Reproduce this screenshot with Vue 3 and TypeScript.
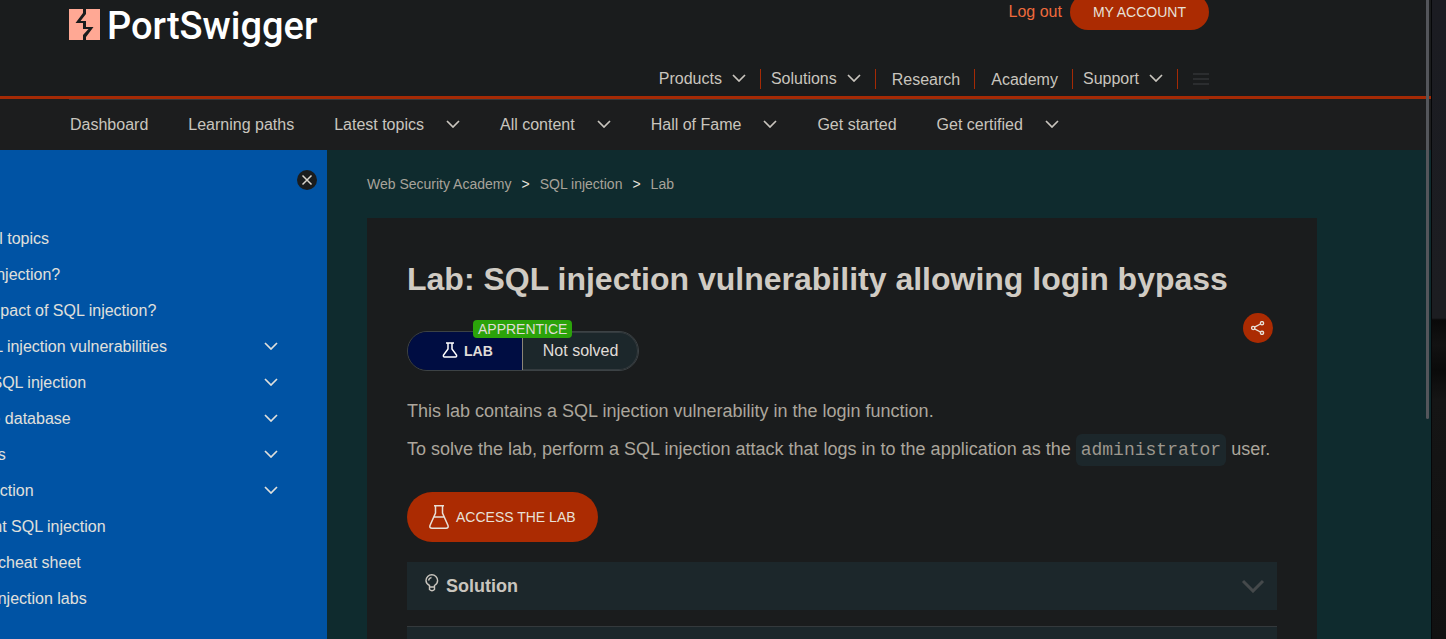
<script setup lang="ts">
interface NavItem {
  label: string
  menu?: boolean
}

const mainNav: NavItem[] = [
  { label: 'Products', menu: true },
  { label: 'Solutions', menu: true },
  { label: 'Research' },
  { label: 'Academy' },
  { label: 'Support', menu: true },
]

const academyNav: NavItem[] = [
  { label: 'Dashboard' },
  { label: 'Learning paths' },
  { label: 'Latest topics', menu: true },
  { label: 'All content', menu: true },
  { label: 'Hall of Fame', menu: true },
  { label: 'Get started' },
  { label: 'Get certified', menu: true },
]

const topics: NavItem[] = [
  { label: 'What is SQL injection?' },
  { label: 'What is the impact of SQL injection?' },
  { label: 'Detecting SQL injection vulnerabilities', menu: true },
  { label: 'Examples of SQL injection', menu: true },
  { label: 'Examining the database', menu: true },
  { label: 'UNION attacks', menu: true },
  { label: 'Blind SQL injection', menu: true },
  { label: 'How to prevent SQL injection' },
  { label: 'SQL injection cheat sheet' },
  { label: 'View all SQL injection labs' },
]
</script>

<template>
  <div class="screen">
    <div class="page">
      <header class="site-header">
        <div class="wrap header-row">
          <a href="#" class="logo">
            <svg width="31" height="31" viewBox="0 0 31 31" aria-hidden="true">
              <rect width="31" height="31" fill="#ffa894" />
              <path
                d="M14 0H17V5L11.500 12H17V18H24.500L17 28V31H14V26L19.500 20H14V14H6.500L14 4Z"
                fill="#1a1c1d"
              />
            </svg>
            <span>PortSwigger</span>
          </a>
          <div class="header-side">
            <div class="account">
              <a href="#" class="logout">Log out</a>
              <a href="#" class="my-account">MY ACCOUNT</a>
            </div>
            <nav class="main-nav" aria-label="Main">
              <template v-for="item in mainNav" :key="item.label">
                <button v-if="item.menu" type="button" class="main-item">
                  {{ item.label }}
                  <svg class="chev" viewBox="0 0 14 8"><path d="M1 1L7 7L13 1" /></svg>
                </button>
                <a v-else href="#" class="main-item plain">{{ item.label }}</a>
              </template>
              <button type="button" class="burger" aria-label="Menu">
                <svg width="16" height="12" viewBox="0 0 16 12">
                  <path d="M0 1H16M0 6H16M0 11H16" stroke="#2b2d2f" stroke-width="2" />
                </svg>
              </button>
            </nav>
          </div>
        </div>
      </header>

      <nav class="academy-nav" aria-label="Academy">
        <div class="wrap academy-row">
          <template v-for="item in academyNav" :key="item.label">
            <button v-if="item.menu" type="button" class="academy-item">
              {{ item.label }}
              <svg class="chev" viewBox="0 0 14 8"><path d="M1 1L7 7L13 1" /></svg>
            </button>
            <a v-else href="#" class="academy-item">{{ item.label }}</a>
          </template>
        </div>
      </nav>

      <div class="body">
        <aside class="sidebar">
          <button type="button" class="close" aria-label="Close">
            <svg width="20" height="20" viewBox="0 0 20 20">
              <path d="M5.5 5.5L14.5 14.5M14.5 5.5L5.5 14.5" />
            </svg>
          </button>
          <a href="#" class="topic back">Back to all topics</a>
          <template v-for="topic in topics" :key="topic.label">
            <button v-if="topic.menu" type="button" class="topic">
              {{ topic.label }}
              <svg class="chev" viewBox="0 0 14 8"><path d="M1 1L7 7L13 1" /></svg>
            </button>
            <a v-else href="#" class="topic">{{ topic.label }}</a>
          </template>
        </aside>

        <main class="main">
          <nav class="crumbs" aria-label="Breadcrumb">
            <a href="#">Web Security Academy</a>
            <span>&gt;</span>
            <a href="#">SQL injection</a>
            <span>&gt;</span>
            <a href="#">Lab</a>
          </nav>

          <article class="card">
            <h1>Lab: SQL injection vulnerability allowing login bypass</h1>
            <div class="status-row">
              <div class="status">
                <span class="level">APPRENTICE</span>
                <span class="kind">
                  <svg width="16" height="16" viewBox="0 0 16 16">
                    <path d="M4 1H12M6 1V7L1.5 13Q1 15 2.500 15H13.500Q15 15 14.500 13L10 7V1" />
                  </svg>
                  LAB
                </span>
                <span class="state">Not solved</span>
              </div>
              <button type="button" class="share" aria-label="Share">
                <svg width="14" height="14" viewBox="0 0 14 14">
                  <path d="M3.500 6.200L9.500 3M3.500 7.800L9.500 11" />
                  <circle cx="2.200" cy="7" r="1.600" />
                  <circle cx="11" cy="2.200" r="1.600" />
                  <circle cx="11" cy="11.800" r="1.600" />
                </svg>
              </button>
            </div>
            <p>This lab contains a SQL injection vulnerability in the login function.</p>
            <p>
              To solve the lab, perform a SQL injection attack that logs in to the application as the
              <code>administrator</code> user.
            </p>
            <a href="#" class="access">
              <svg width="20" height="24" viewBox="0 0 20 24">
                <path d="M5 .8H15M6.500 1V8L1 20.500Q.2 23.200 3 23.200H17Q19.800 23.200 19 20.500L13.500 8V1M5 12H15" />
              </svg>
              ACCESS THE LAB
            </a>
            <details class="panel">
              <summary>
                <svg class="bulb" width="14" height="18" viewBox="0 0 14 18">
                  <path d="M4.500 13V11.500Q1 9.800 1 6.600A5.700 5.700 0 0 1 12.600 6.600Q12.600 9.800 9.500 11.500V13ZM4.500 13V15.500Q7 18 9.500 15.500V13M3.500 6.500Q4 4 6.500 3.500" />
                </svg>
                <span>Solution</span>
                <svg class="panel-chev" width="24" height="14" viewBox="0 0 24 14">
                  <path d="M2 2L12 12L22 2" />
                </svg>
              </summary>
            </details>
            <details class="panel ruled">
              <summary><span>Community solutions</span></summary>
            </details>
          </article>
        </main>
      </div>
      <div class="scroll-thumb"></div>
    </div>
    <div class="backdrop"></div>
  </div>
</template>

<style>
body {
  margin: 0;
  background: #1a1c1d;
}
</style>

<style scoped>
.screen {
  display: flex;
  height: 100vh;
  overflow: hidden;
  font: 16px/20px "Liberation Sans", Arial, sans-serif;
  color: #c9c5be;
}
.page {
  position: relative;
  flex: 1;
  min-width: 0;
  display: flex;
  flex-direction: column;
  overflow: hidden;
  background: #1a1c1d;
}
a {
  color: inherit;
  text-decoration: none;
}
button {
  margin: 0;
  padding: 0;
  border: 0;
  background: none;
  color: inherit;
  font: inherit;
  cursor: pointer;
}
svg {
  flex: none;
  fill: none;
}
.chev {
  width: 14px;
  height: 8px;
  margin-bottom: 2px;
  stroke: currentColor;
  stroke-width: 1.7;
}
.wrap {
  max-width: 1140px;
  margin-left: 69px;
}
.site-header {
  flex: none;
  border-bottom: 3px solid #a52a05;
}
.header-row {
  display: flex;
  justify-content: space-between;
  height: 96px;
}
.logo {
  display: flex;
  align-items: flex-start;
  gap: 7px;
  padding-top: 9px;
  color: #fff;
  font: 500 38px/34px Roboto, sans-serif;
}
.header-side {
  display: flex;
  flex-direction: column;
  align-items: flex-end;
  justify-content: space-between;
}
.account {
  display: flex;
  align-items: center;
  gap: 8px;
  margin-top: -6px;
}
.logout {
  color: #ee6a3c;
}
.my-account {
  padding: 0 23px;
  border-radius: 18px;
  background: #ab2b02;
  color: #e8e0d8;
  font-size: 14px;
  line-height: 36px;
}
.main-nav {
  display: flex;
  align-items: center;
  padding-bottom: 7px;
}
.main-item {
  display: flex;
  align-items: center;
  gap: 10px;
  padding: 0 14px 0 10px;
  border-right: 1px solid #a52a05;
}
.main-item.plain {
  padding: 1px 14px 0 16px;
  line-height: 19px;
}
.burger {
  display: flex;
  padding-left: 15px;
}
.academy-nav {
  flex: none;
  background: #1c1d1e;
}
.academy-row {
  display: flex;
  gap: 40px;
  box-sizing: border-box;
  padding-left: 1px;
  border-top: 1px solid #35383b;
}
.academy-item {
  display: flex;
  align-items: center;
  gap: 22px;
  line-height: 50px;
}
.body {
  flex: 1;
  min-height: 0;
  display: flex;
  background: #0f2b2e;
}
.sidebar {
  flex: none;
  box-sizing: border-box;
  width: 428px;
  margin-left: -101px;
  padding-top: 20px;
  background: #0053a4;
  color: #e0e0dc;
}
.close {
  display: flex;
  margin: 0 10px 31px auto;
  border-radius: 50%;
  background: #1a1c1d;
}
.close svg {
  stroke: #d8d4cc;
  stroke-width: 1.5;
}
.topic {
  display: flex;
  align-items: center;
  justify-content: space-between;
  box-sizing: border-box;
  width: 100%;
  padding-right: 49px;
  line-height: 36px;
}
.back {
  padding-left: 30px;
}
.main {
  flex: 1;
  min-width: 0;
  padding: 24px 40px 0;
}
.crumbs {
  display: flex;
  gap: 10px;
  margin-bottom: 24px;
  color: #a8a39a;
  font-size: 14px;
}
.crumbs span {
  color: #e8e4dc;
}
.card {
  box-sizing: border-box;
  max-width: 950px;
  min-height: 100%;
  padding: 41px 40px;
  background: #1a1c1d;
}
h1 {
  margin: 0 0 14px;
  color: #d0cbc3;
  font-size: 32px;
  line-height: 40px;
}
.status-row {
  display: flex;
  align-items: flex-start;
  justify-content: space-between;
  padding-right: 4px;
}
.status {
  position: relative;
  display: flex;
  box-sizing: border-box;
  height: 40px;
  margin: 18px 0 28px;
  border: 1px solid #3c4245;
  border-radius: 20px;
  color: #e0ddd8;
}
.kind,
.state {
  display: flex;
  align-items: center;
}
.kind {
  gap: 6px;
  padding: 0 29px 0 34px;
  border-right: 1px solid #8c8576;
  border-radius: 19px 0 0 19px;
  background: #000d42;
  font-size: 14px;
  font-weight: bold;
}
.kind svg {
  margin-bottom: 2px;
  stroke: #fff;
  stroke-width: 1.5;
}
.state {
  padding: 0 19px 0 20px;
  border: solid #343b3f;
  border-width: 1px 1px 1px 0;
  border-radius: 0 19px 19px 0;
  background: #1c272b;
}
.level {
  position: absolute;
  top: -12px;
  left: 65px;
  padding: 0 5px;
  border-radius: 4px;
  background: #2ba30a;
  font-size: 14px;
  line-height: 18px;
}
.share {
  display: flex;
  padding: 8px;
  border-radius: 50%;
  background: #ab2b02;
}
.share svg {
  stroke: #e8e0d8;
  stroke-width: 1.4;
}
p {
  margin: 0 0 14px;
  color: #aca69c;
  font-size: 18px;
  line-height: 24px;
}
code {
  padding: 6px 5px;
  border-radius: 6px;
  background: #1c272b;
  color: #9c978e;
  font: 18px/20px "Liberation Mono", monospace;
}
.access {
  display: inline-flex;
  align-items: center;
  gap: 7px;
  margin: 17px 0 20px;
  padding: 0 22px;
  border-radius: 25px;
  background: #ab2b02;
  color: #e8e0d8;
  font-size: 14px;
  line-height: 50px;
  vertical-align: top;
}
.access svg {
  stroke: #e8e0d8;
  stroke-width: 1.5;
}
.panel {
  margin-bottom: 16px;
  background: #1c272b;
}
.ruled {
  border-top: 1px solid #34393c;
}
summary {
  display: flex;
  align-items: center;
  gap: 7px;
  padding: 0 12px 0 18px;
  color: #c9c5be;
  font-size: 18px;
  font-weight: bold;
  line-height: 48px;
  list-style: none;
}
.bulb {
  margin-bottom: 6px;
  stroke: #c9c5be;
  stroke-width: 1.4;
}
.panel-chev {
  margin-left: auto;
  stroke: #45494b;
  stroke-width: 3;
}
.scroll-thumb {
  position: absolute;
  top: 0;
  right: 2px;
  width: 3px;
  height: 419px;
  border-radius: 0 0 2px 2px;
  background: #54565b;
}
.backdrop {
  flex: none;
  width: 14px;
  border-left: 1px solid #050608;
  background: linear-gradient(#1b1c22 0, #1c1d21 318px, #090909 320px, #121212 345px, #0a0a0a 370px, #151515 400px, #111 100%);
}
</style>
